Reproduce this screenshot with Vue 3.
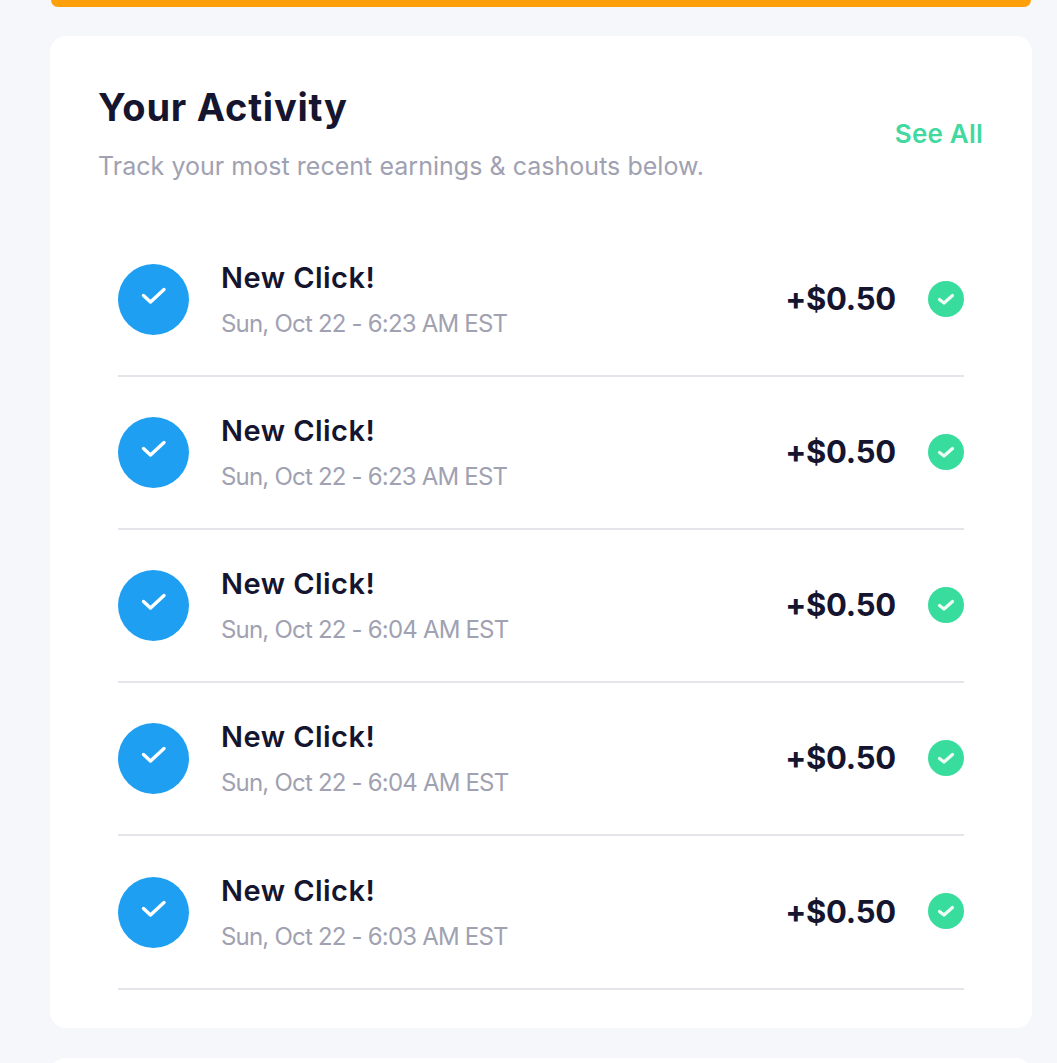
<script setup>
const rows = [
  '6:23 AM EST',
  '6:23 AM EST',
  '6:04 AM EST',
  '6:04 AM EST',
  '6:03 AM EST'
]
</script>

<template>
  <div class="page">
    <div class="topbar"></div>
    <section class="card">
      <header class="head">
        <div>
          <h2 class="title">Your Activity</h2>
          <p class="sub">Track your most recent earnings &amp; cashouts below.</p>
        </div>
        <a class="see">See All</a>
      </header>
      <ul class="list">
        <li v-for="(t, i) in rows" :key="i" class="row">
          <span class="avatar">
            <svg width="28" height="28" viewBox="0 0 28 28" fill="none">
              <path d="M3.5 13.5 L10.5 20 L24 7.5" stroke="#fff" stroke-width="3.4" stroke-linecap="round" stroke-linejoin="round" />
            </svg>
          </span>
          <div class="info">
            <div class="name">New Click!</div>
            <div class="date">Sun, Oct 22 - {{ t }}</div>
          </div>
          <div class="amount">+$0.50</div>
          <span class="ok">
            <svg width="18" height="18" viewBox="0 0 18 18" fill="none">
              <path d="M2.5 9.5 L7 13 L15.5 5.5" stroke="#fff" stroke-opacity=".92" stroke-width="3.2" stroke-linecap="round" stroke-linejoin="round" />
            </svg>
          </span>
        </li>
      </ul>
    </section>
    <div class="nextcard"></div>
  </div>
</template>

<style>
html, body { margin: 0; background: #f6f7fb; }
</style>

<style scoped>
.page {
  height: 1063px;
  overflow: hidden;
  padding: 0 25px 0 50px;
  background: #f6f7fb;
  font-family: Inter, "Noto Sans", sans-serif;
}
.topbar {
  height: 7px;
  margin: 0 1px;
  background: #ff9f0a;
  border-radius: 0 0 14px 14px;
}
.card {
  margin-top: 29px;
  height: 992px;
  box-sizing: border-box;
  background: #fff;
  border-radius: 16px;
  padding: 47px 49px 0 48px;
}
.nextcard {
  margin-top: 30px;
  height: 40px;
  background: #fff;
  border-radius: 16px 16px 0 0;
}
.head {
  display: flex;
  justify-content: space-between;
  align-items: center;
}
.title {
  margin: 0;
  font-size: 38px;
  line-height: 48px;
  font-weight: 700;
  color: #15152f;
  letter-spacing: 0.75px;
}
.sub {
  margin: 20px 0 0;
  font-size: 25px;
  line-height: 30px;
  color: #a0a1b1;
  letter-spacing: 0.03px;
}
.see {
  font-size: 26px;
  font-weight: 600;
  line-height: 32px;
  color: #41d9a0;
  letter-spacing: 0.2px;
  margin-top: 4px;
}
.list {
  list-style: none;
  margin: 43px 19px 0 20px;
  padding: 0;
}
.row {
  display: flex;
  align-items: center;
  height: 153px;
  box-sizing: border-box;
  border-bottom: 2px solid #e4e5ea;
}
.row:last-child {
  height: 154px;
}
.avatar {
  flex: none;
  width: 71px;
  height: 71px;
  border-radius: 50%;
  background: #1f9ff2;
  display: flex;
  align-items: center;
  justify-content: center;
  padding-bottom: 7px;
  box-sizing: border-box;
}
.info {
  flex: 1;
  margin-left: 32px;
}
.name {
  font-size: 29px;
  line-height: 36px;
  font-weight: 600;
  color: #15152f;
  letter-spacing: 0.45px;
}
.date {
  margin-top: 13px;
  font-size: 24px;
  line-height: 30px;
  color: #a0a1b1;
  letter-spacing: -0.8px;
}
.amount {
  font-size: 31px;
  font-weight: 700;
  color: #15152f;
  letter-spacing: -0.25px;
  margin-bottom: 2px;
}
.ok {
  flex: none;
  width: 36px;
  height: 36px;
  margin-left: 32px;
  margin-bottom: 2px;
  border-radius: 50%;
  background: #38dc9d;
  display: flex;
  align-items: center;
  justify-content: center;
}
</style>
